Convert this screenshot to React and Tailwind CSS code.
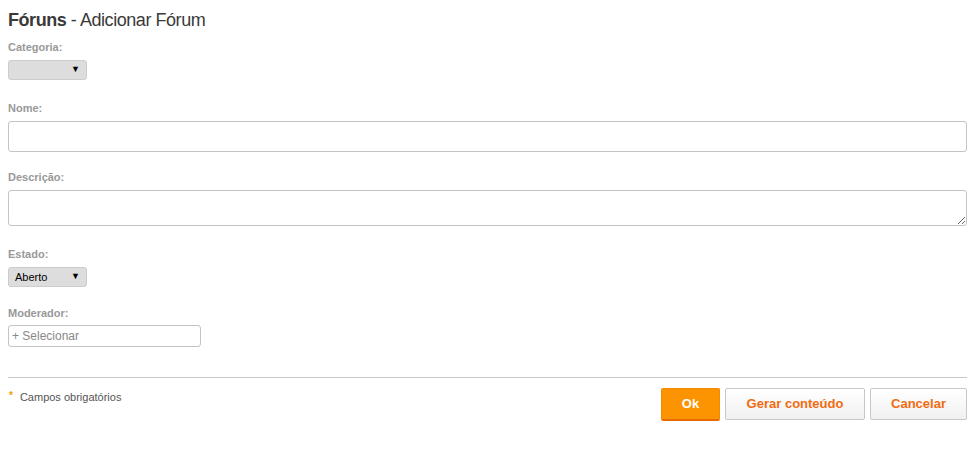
export default function App() {
  return (
    <div className="bg-white px-2 pt-[9px] font-['Liberation_Sans',Arial,sans-serif] text-[#333]">
      <h1 className="text-[18px] leading-[22px] text-[#3a3a3a] tracking-[-0.45px]">
        <span className="font-bold">Fóruns</span> - Adicionar Fórum
      </h1>

      {/* Categoria */}
      <div className="mt-[10px]">
        <label className="block text-[11px] leading-[13px] font-bold text-[#999]">Categoria:</label>
        <div className="mt-[6px] flex h-5 w-[79px] items-center justify-end rounded-[3px] border border-[#ccc] bg-[#ddd] pr-[6px]">
          <span className="text-[9px] text-black">▼</span>
        </div>
      </div>

      {/* Nome */}
      <div className="mt-[22px]">
        <label className="block text-[11px] leading-[13px] font-bold text-[#999]">Nome:</label>
        <input className="mt-[6px] block h-[31px] w-full rounded-[3px] border border-[#c4c4c4] bg-white outline-none" />
      </div>

      {/* Descrição */}
      <div className="mt-[19px]">
        <label className="block text-[11px] leading-[13px] font-bold text-[#999]">Descrição:</label>
        <textarea className="mt-[6px] block h-[36px] w-full resize-y rounded-[3px] border border-[#c4c4c4] bg-white outline-none" />
      </div>

      {/* Estado */}
      <div className="mt-[22px]">
        <label className="block text-[11px] leading-[13px] font-bold text-[#999]">Estado:</label>
        <div className="mt-[6px] flex h-5 w-[79px] items-center justify-between rounded-[3px] border border-[#ccc] bg-[#ddd] pl-[6px] pr-[6px]">
          <span className="text-[11px] text-black">Aberto</span>
          <span className="text-[9px] text-black">▼</span>
        </div>
      </div>

      {/* Moderador */}
      <div className="mt-[20px]">
        <label className="block text-[11px] leading-[13px] font-bold text-[#999]">Moderador:</label>
        <div className="mt-[5px] flex h-[22px] w-[193px] items-center rounded-[3px] border border-[#c4c4c4] bg-white pl-[3px]">
          <span className="text-[12px] text-[#888]">+ Selecionar</span>
        </div>
      </div>

      <div className="mt-[30px] border-t border-[#c8c8c8]" />

      <div className="flex items-start justify-between pt-[10px]">
        <div className="flex items-center pt-[1px] text-[11px] text-[#555]">
          <span className="mr-[7px] ml-[1px] -translate-y-[2px] text-[10px] font-bold text-[#f90]">*</span>
          Campos obrigatórios
        </div>
        <div className="flex gap-[5px]">
          <button className="h-[33px] w-[59px] rounded-[2px] border border-[#f28a00] border-b-2 border-b-[#e86a00] bg-[#fb9400] text-[13px] font-bold text-white">
            Ok
          </button>
          <button className="h-[32px] w-[140px] rounded-[2px] border border-[#c8c8c8] bg-gradient-to-b from-white to-[#f0f0f0] text-[13px] font-bold text-[#f26b10]">
            Gerar conteúdo
          </button>
          <button className="h-[32px] w-[97px] rounded-[2px] border border-[#c8c8c8] bg-gradient-to-b from-white to-[#f0f0f0] text-[13px] font-bold text-[#f26b10]">
            Cancelar
          </button>
        </div>
      </div>
    </div>
  )
}
